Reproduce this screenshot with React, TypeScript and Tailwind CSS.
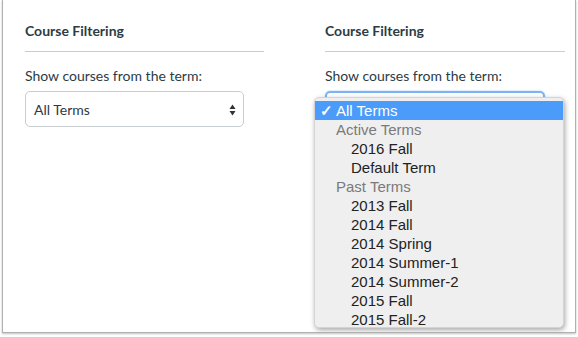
import React from 'react';

const lato = { fontFamily: 'Lato, "Open Sans", sans-serif' };
const menuFont = { fontFamily: '"Liberation Sans", Arial, sans-serif' };

function Heading() {
  return (
    <div className="border-b border-[#c7cdd1] pb-[10px]">
      <h3 className="text-[14px] leading-[20px] font-bold text-[#2d3b45]">Course Filtering</h3>
    </div>
  );
}

function SelectArrows() {
  return (
    <svg width="7" height="12" viewBox="0 0 7 12" className="shrink-0 mt-[1px]">
      <path d="M3.5 0.5 L6.5 5 L0.5 5 Z" fill="#333" />
      <path d="M3.5 11.5 L6.5 7 L0.5 7 Z" fill="#333" />
    </svg>
  );
}

const options: { label: string; kind: 'selected' | 'group' | 'option' }[] = [
  { label: 'All Terms', kind: 'selected' },
  { label: 'Active Terms', kind: 'group' },
  { label: '2016 Fall', kind: 'option' },
  { label: 'Default Term', kind: 'option' },
  { label: 'Past Terms', kind: 'group' },
  { label: '2013 Fall', kind: 'option' },
  { label: '2014 Fall', kind: 'option' },
  { label: '2014 Spring', kind: 'option' },
  { label: '2014 Summer-1', kind: 'option' },
  { label: '2014 Summer-2', kind: 'option' },
  { label: '2015 Fall', kind: 'option' },
  { label: '2015 Fall-2', kind: 'option' },
];

function Dropdown() {
  return (
    <div
      className="absolute top-[6px] left-[-11px] w-[250px] h-[231px] overflow-hidden rounded-[5px] bg-[#efefef] border border-[#d4d4d4] shadow-[1px_2px_5px_rgba(0,0,0,0.35)] pt-[3px]"
      style={menuFont}
    >
      {options.map((o) => (
        <div
          key={o.label}
          className={
            'h-[19px] flex items-center text-[15px] leading-[19px] ' +
            (o.kind === 'selected' ? 'bg-[#4b9bfb] text-white' : '')
          }
        >
          {o.kind === 'selected' && (
            <>
              <span className="w-[21px] pl-[5px] text-[15px] font-bold">✓</span>
              <span>{o.label}</span>
            </>
          )}
          {o.kind === 'group' && <span className="pl-[21px] text-[#7a7a7a]">{o.label}</span>}
          {o.kind === 'option' && <span className="pl-[36px] text-[#222]">{o.label}</span>}
        </div>
      ))}
    </div>
  );
}

export default function App() {
  return (
    <div className="w-[578px] h-[337px] bg-white" style={lato}>
      <div className="ml-[2px] w-[574px] h-[333px] bg-white border-l border-r border-b border-[#b0b0b0] shadow-[0_1px_2px_rgba(0,0,0,0.25)] overflow-hidden flex pl-[22px] pt-[21px]">
        <div className="w-[239px]">
          <Heading />
          <p className="mt-[14px] text-[14px] leading-[20px] text-[#2d3b45]">Show courses from the term:</p>
          <div className="mt-[5px] w-[219px] h-[36px] rounded-[5px] border border-[#c7cdd1] flex items-center justify-between pl-[8px] pr-[7px] text-[14px] text-[#2d3b45]">
            <span>All Terms</span>
            <SelectArrows />
          </div>
        </div>
        <div className="ml-[61px] w-[240px]">
          <Heading />
          <p className="mt-[14px] text-[14px] leading-[20px] text-[#2d3b45]">Show courses from the term:</p>
          <div className="relative mt-[5px] w-[220px] h-[36px]">
            <div className="h-full rounded-[5px] border-2 border-[#7db3f3] shadow-[0_0_2px_#9cc6f7]" />
            <Dropdown />
          </div>
        </div>
      </div>
    </div>
  );
}
